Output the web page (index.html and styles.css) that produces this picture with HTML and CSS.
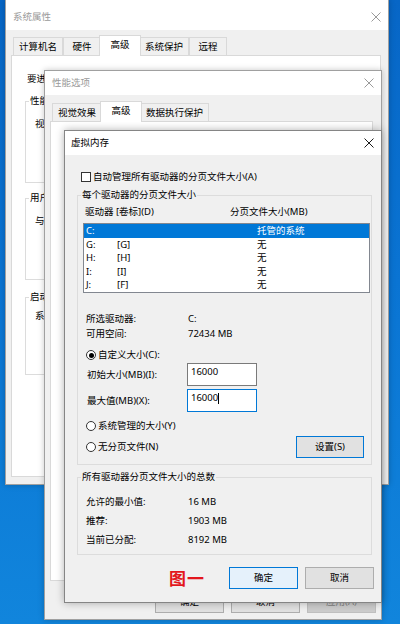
FILE: index.html
```html
<!DOCTYPE html>
<html lang="zh-CN">
<head>
<meta charset="utf-8">
<title>虚拟内存</title>
<link rel="stylesheet" href="styles.css">
</head>
<body>
<main class="desktop">

  <section class="win win-sys">
    <header class="titlebar">
      <span class="title">系统属性</span>
      <svg class="close" viewBox="0 0 10 10"><path d="M0.5 0.5 9.5 9.5M9.5 0.5 0.5 9.5"/></svg>
    </header>
    <div class="win-body sys-body">
      <nav class="tabs">
        <span class="tab">计算机名</span>
        <span class="tab">硬件</span>
        <span class="tab active">高级</span>
        <span class="tab">系统保护</span>
        <span class="tab">远程</span>
      </nav>
      <div class="panel sys-panel">
        <p class="admin-note">要进行大多数更改，你必须作为管理员登录。</p>
        <fieldset class="sys-grp g1"><legend>性能</legend><p>视觉效果，处理器计划，内存使用，以及虚拟内存</p></fieldset>
        <fieldset class="sys-grp g2"><legend>用户配置文件</legend><p>与登录帐户相关的桌面设置</p></fieldset>
        <fieldset class="sys-grp g3"><legend>启动和故障恢复</legend><p>系统启动、系统故障和调试信息</p></fieldset>
      </div>
    </div>
  </section>

  <section class="win win-perf">
    <header class="titlebar">
      <span class="title">性能选项</span>
      <svg class="close" viewBox="0 0 10 10"><path d="M0.5 0.5 9.5 9.5M9.5 0.5 0.5 9.5"/></svg>
    </header>
    <div class="win-body perf-body">
      <nav class="tabs">
        <span class="tab">视觉效果</span>
        <span class="tab active">高级</span>
        <span class="tab">数据执行保护</span>
      </nav>
      <div class="panel perf-panel"></div>
      <div class="btn-row perf-btns">
        <button class="btn">确定</button>
        <button class="btn">取消</button>
        <button class="btn disabled">应用(A)</button>
      </div>
    </div>
  </section>

  <section class="win win-vm">
    <header class="titlebar">
      <span class="title">虚拟内存</span>
      <svg class="close" viewBox="0 0 10 10"><path d="M0.5 0.5 9.5 9.5M9.5 0.5 0.5 9.5"/></svg>
    </header>
    <div class="vm-body">
      <div class="check-row"><span class="checkbox"></span><span>自动管理所有驱动器的分页文件大小(A)</span></div>

      <fieldset class="grp grp-drives">
        <legend>每个驱动器的分页文件大小</legend>
        <div class="list-head"><span>驱动器 [卷标](D)</span><span>分页文件大小(MB)</span></div>
        <ul class="listbox">
          <li class="sel"><span>C:</span><span></span><span>托管的系统</span></li>
          <li><span>G:</span><span>[G]</span><span>无</span></li>
          <li><span>H:</span><span>[H]</span><span>无</span></li>
          <li><span>I:</span><span>[I]</span><span>无</span></li>
          <li><span>J:</span><span>[F]</span><span>无</span></li>
        </ul>
        <dl class="info">
          <dt>所选驱动器:</dt><dd>C:</dd>
          <dt>可用空间:</dt><dd>72434 MB</dd>
        </dl>
        <div class="radio-row custom"><span class="radio on"></span><span>自定义大小(C):</span></div>
        <div class="field-row first"><span>初始大小(MB)(I):</span><div class="textbox">16000</div></div>
        <div class="field-row second"><span>最大值(MB)(X):</span><div class="textbox focus">16000<span class="caret"></span></div></div>
        <div class="radio-row sysman"><span class="radio"></span><span>系统管理的大小(Y)</span></div>
        <div class="radio-row nofile">
          <span class="radio-label"><span class="radio"></span><span>无分页文件(N)</span></span>
          <button class="btn focus set-btn">设置(S)</button>
        </div>
      </fieldset>

      <fieldset class="grp grp-total">
        <legend>所有驱动器分页文件大小的总数</legend>
        <dl class="info totals">
          <dt>允许的最小值:</dt><dd>16 MB</dd>
          <dt>推荐:</dt><dd>1903 MB</dd>
          <dt>当前已分配:</dt><dd>8192 MB</dd>
        </dl>
      </fieldset>

      <div class="btn-row vm-btns">
        <span class="fig-label">图一</span>
        <button class="btn default">确定</button>
        <button class="btn">取消</button>
      </div>
    </div>
  </section>

</main>
</body>
</html>
```

FILE: styles.css
```css
* { box-sizing: border-box; margin: 0; padding: 0; }

html, body { width: 400px; height: 624px; overflow: hidden; }

body {
  font-family: "Noto Sans", "Noto Sans CJK SC", sans-serif;
  font-size: 9.5px;
  line-height: 12px;
  color: #000;
  background: linear-gradient(180deg, #0766c6 0%, #0a74d3 45%, #1185dc 100%);
}

.desktop { position: relative; width: 400px; height: 624px; }

/* ---------- windows ---------- */
.win {
  position: absolute;
  display: flex;
  flex-direction: column;
  background: #f0f0f0;
  border: 1px solid #a0a0a0;
  box-shadow: 0 0 6px rgba(0, 0, 0, 0.22);
}
.win-sys  { left: 5px;  top: -1px;  width: 384px; height: 486px; }
.win-perf { left: 44px; top: 70px;  width: 338px; height: 550px; }
.win-vm   { left: 64px; top: 130px; width: 318px; height: 473px; border-color: #858585; box-shadow: 0 0 8px rgba(0, 0, 0, 0.3); }

.titlebar {
  flex: none;
  height: 24px;
  display: flex;
  align-items: center;
  justify-content: space-between;
  padding: 0 7px;
  background: #fff;
}
.win-sys .titlebar { height: 30px; padding-top: 4px; }
.win-vm .titlebar { padding-left: 6px; }

.title { color: #9a9a9a; }
.win-vm .title { color: #000; }

.close { width: 10px; height: 10px; fill: none; stroke: #9a9a9a; stroke-width: 1; }
.win-vm .close { stroke: #1a1a1a; }

.win-body { flex: 1; display: flex; flex-direction: column; }
.sys-body { padding: 5px 7px 0 5px; }
.perf-body { padding: 6px 5px 6px 5px; }

/* ---------- tabs ---------- */
.tabs {
  display: flex;
  align-items: flex-end;
  padding-left: 2px;
  position: relative;
  z-index: 1;
}
.tab {
  height: 18px;
  min-width: 38px;
  padding: 0 5px;
  display: flex;
  align-items: center;
  justify-content: center;
  border: 1px solid #d9d9d9;
  border-bottom: none;
  background: #f0f0f0;
  white-space: nowrap;
}
.tab.active {
  height: 21px;
  min-width: 42px;
  margin: 0 -2px -1px;
  padding: 0 7px 2px;
  background: #fff;
  position: relative;
  z-index: 2;
}

.panel { background: #fff; border: 1px solid #d9d9d9; }
.sys-panel { height: 422px; }
.perf-panel { flex: 1; margin-right: 3px; }

/* ---------- system properties panel ---------- */
.admin-note { margin-top: 17px; padding-left: 15px; white-space: nowrap; }
.sys-grp {
  margin: 0 13px 0 13px;
  border: 1px solid #dcdcdc;
  padding: 0 1px 52px 3px;
  min-width: 0;
}
.sys-grp legend { padding: 0 1px; line-height: 12px; }
.sys-grp p { margin-top: 11px; padding-left: 6px; white-space: nowrap; }
.sys-grp.g1 { margin-top: 10px; }
.sys-grp.g2 { margin-top: 9px; }
.sys-grp.g3 { margin-top: 11px; }
.sys-grp.g3 p { margin-top: 7px; }

/* ---------- buttons ---------- */
.btn-row { display: flex; justify-content: flex-end; gap: 7px; }
.perf-btns { margin-top: 10px; }

.btn {
  font: inherit;
  line-height: 12px;
  height: 22px;
  width: 69px;
  padding: 0;
  color: #000;
  background: #e1e1e1;
  border: 1px solid #adadad;
  white-space: nowrap;
}
.btn.disabled { background: #cccccc; border-color: #bfbfbf; color: #838383; }
.btn.default { background: #e5f1fb; border-color: #0078d7; }
.btn.focus { border-color: #0078d7; }

/* ---------- virtual memory ---------- */
.vm-body { flex: 1; display: flex; flex-direction: column; }

.check-row {
  margin-top: 16px;
  padding-left: 16px;
  height: 12px;
  display: flex;
  align-items: center;
  gap: 2px;
  white-space: nowrap;
}
.checkbox {
  width: 10px;
  height: 10px;
  border: 1px solid #333;
  background: #fff;
  flex: none;
}

.grp {
  margin: 0 9px 0 12px;
  border: 1px solid #dcdcdc;
  padding: 0 1px 0 3px;
  min-width: 0;
}
.grp legend { padding: 0 1px; line-height: 12px; white-space: nowrap; }
.grp-drives { margin-top: 6px; padding-bottom: 6px; }
.grp-total { margin-top: 6px; padding-bottom: 5.5px; }

.list-head {
  margin-top: 5px;
  padding-left: 4px;
  display: grid;
  grid-template-columns: 145px 1fr;
  white-space: nowrap;
}

.listbox {
  list-style: none;
  margin: 5px 0 0 2px;
  height: 70px;
  border: 1px solid #828790;
  background: #fff;
}
.listbox li {
  height: 13.5px;
  line-height: 13.5px;
  padding-left: 2px;
  display: grid;
  grid-template-columns: 31px 140px 1fr;
  white-space: nowrap;
}
.listbox li.sel { background: #0078d7; color: #fff; }

.info {
  margin-top: 17.5px;
  padding-left: 5px;
  display: grid;
  grid-template-columns: 102px 1fr;
  line-height: 15px;
  white-space: nowrap;
}
.info.totals { margin-top: 8.5px; line-height: 19px; }

.radio-row {
  padding-left: 5px;
  height: 12px;
  display: flex;
  align-items: center;
  gap: 2px;
  white-space: nowrap;
}
.radio-row.custom { margin-top: 8.5px; }
.radio-row.sysman { margin-top: 8px; }
.radio-row.nofile {
  margin-top: 4px;
  height: 22px;
  justify-content: space-between;
  padding-right: 6px;
}
.radio-label { display: flex; align-items: center; gap: 2px; }
.set-btn { width: 68px; }

.radio {
  width: 10px;
  height: 10px;
  border: 1px solid #333;
  border-radius: 50%;
  background: #fff;
  flex: none;
  display: flex;
  align-items: center;
  justify-content: center;
}
.radio.on::after {
  content: "";
  width: 5px;
  height: 5px;
  border-radius: 50%;
  background: #000;
}

.field-row {
  padding-left: 6px;
  display: grid;
  grid-template-columns: 100px 70px;
  align-items: center;
  white-space: nowrap;
}
.field-row.first { margin-top: 2px; }
.field-row.second { margin-top: 3px; }

.textbox {
  height: 23px;
  border: 1px solid #7a7a7a;
  background: #fff;
  padding: 2px 3px 0;
  display: flex;
  align-items: flex-start;
}
.textbox.focus { border-color: #0078d7; }
.caret { width: 1px; height: 11px; margin-top: 0.5px; background: #000; }

.vm-btns { margin-top: 12px; padding-right: 7px; align-items: center; }
.fig-label {
  margin-right: 17px;
  font-size: 17px;
  line-height: 22px;
  font-weight: bold;
  color: #e3161c;
  font-family: "Noto Sans CJK SC", sans-serif;
  letter-spacing: 1px;
}
```
